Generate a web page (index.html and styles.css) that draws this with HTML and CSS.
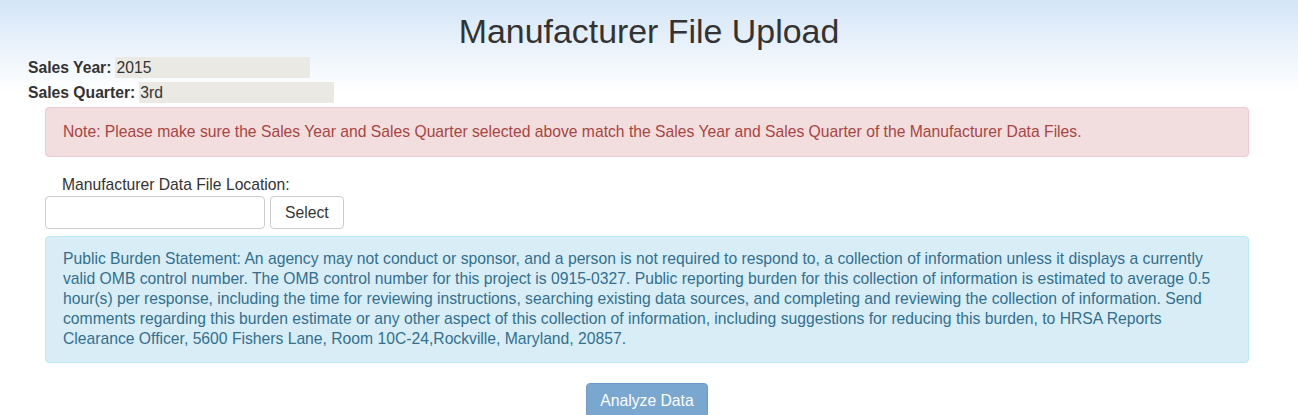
FILE: index.html
```html
<!DOCTYPE HTML>
<html>
<head>
  <meta http-equiv="content-type" content="text/html; charset=utf-8">
  <title>Manufacturer File Upload</title>
  <link rel="stylesheet" href="styles.css">
</head>
<body>
  <h1>Manufacturer File Upload</h1>
  <div class="period">
    <div class="field"><b>Sales Year:</b> <span class="value year">2015</span></div>
    <div class="field"><b>Sales Quarter:</b> <span class="value">3rd</span></div>
  </div>
  <div class="content">
    <div class="alert alert-danger">
      Note: Please make sure the Sales Year and Sales Quarter selected above match the Sales Year and Sales Quarter of the Manufacturer Data Files.
    </div>
    <div class="upload">
      <label for="file">Manufacturer Data File Location:</label>
      <div class="picker">
        <input id="file" type="text">
        <button type="button" class="btn">Select</button>
      </div>
    </div>
    <div class="alert alert-info">
      Public Burden Statement: An agency may not conduct or sponsor, and a person is not required to respond to, a collection of information unless it displays a currently valid OMB control number. The OMB control number for this project is 0915-0327. Public reporting burden for this collection of information is estimated to average 0.5 hour(s) per response, including the time for reviewing instructions, searching existing data sources, and completing and reviewing the collection of information. Send comments regarding this burden estimate or any other aspect of this collection of information, including suggestions for reducing this burden, to HRSA Reports Clearance Officer, 5600 Fishers Lane, Room 10C-24,Rockville, Maryland, 20857.
    </div>
    <div class="actions">
      <button type="button" class="btn btn-primary" disabled>Analyze Data</button>
    </div>
  </div>
</body>
</html>
```

FILE: styles.css
```css
html, body {
  margin: 0;
  padding: 0;
}
body {
  background: #fff linear-gradient(#d4e5f7, #fff 92px) no-repeat;
  color: #333;
  font-family: "Liberation Sans", Arial, sans-serif;
  font-size: 15.7px;
  line-height: 20px;
}
h1 {
  margin: 0;
  padding: 12px 0 0 0;
  height: 43px;
  font-size: 33.9px;
  line-height: 38px;
  font-weight: normal;
  text-align: center;
  color: #333;
}
.period {
  padding-left: 28px;
}
.field {
  height: 25px;
  display: flex;
  align-items: center;
}
.field b {
  margin-right: 4px;
}
.value {
  width: 194px;
  height: 21px;
  line-height: 21px;
  padding-left: 1px;
  background-color: #ebe9e3;
}
.content {
  margin: 0 49px 0 45px;
  padding-top: 2px;
}
.alert {
  border: 1px solid transparent;
  border-radius: 4px;
}
.alert-danger {
  padding: 14px 17px;
  background-color: #f2dede;
  border-color: #ebccd1;
  color: #a94442;
}
.alert-info {
  padding: 12px 17px 13px;
  background-color: #d9edf7;
  border-color: #bce8f1;
  color: #31708f;
}
.upload {
  padding-top: 18px;
  padding-bottom: 7px;
}
.upload label {
  display: block;
  padding-left: 17px;
  margin-bottom: 1px;
}
.picker {
  display: flex;
  gap: 5px;
}
.picker input {
  width: 220px;
  height: 33px;
  box-sizing: border-box;
  border: 1px solid #ccc;
  border-radius: 4px;
  margin: 0;
  font: inherit;
}
.btn {
  height: 33px;
  box-sizing: border-box;
  padding: 0 14px;
  border: 1px solid #ccc;
  border-radius: 4px;
  background-color: #fff;
  color: #333;
  font: inherit;
  white-space: nowrap;
}
.actions {
  padding-top: 20px;
  text-align: center;
}
.btn-primary {
  width: 122px;
  height: 35px;
  padding: 0;
  border-color: #6f9cc6;
  background-color: #7aa7d0;
  color: #fff;
}
```
